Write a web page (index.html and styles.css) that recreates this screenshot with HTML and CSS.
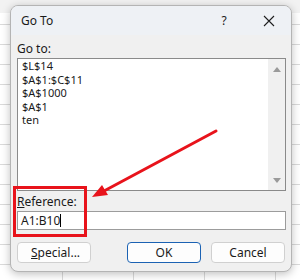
FILE: index.html
```html
<!DOCTYPE html>
<html lang="en">
<head>
    <meta charset="UTF-8">
    <meta name="viewport" content="width=device-width, initial-scale=1.0">
    <title>Go To</title>
    <link rel="stylesheet" href="styles.css">
</head>
<body>
    <div class="sheet">
        <div class="dialog">
            <div class="titlebar">
                <div class="title">Go To</div>
                <div class="help">?</div>
                <div class="close">
                    <svg width="12" height="12" viewBox="0 0 12 12">
                        <path d="M1 1 L11 11 M11 1 L1 11" stroke="#1f1f1f" stroke-width="1.1" fill="none"/>
                    </svg>
                </div>
            </div>
            <div class="content">
                <div class="label label-goto">Go to:</div>
                <div class="listbox">
                    <div class="items">
                        <div class="item">$L$14</div>
                        <div class="item">$A$1:$C$11</div>
                        <div class="item">$A$1000</div>
                        <div class="item">$A$1</div>
                        <div class="item">ten</div>
                    </div>
                    <div class="scrollbar">
                        <div class="arrow-up"></div>
                        <div class="arrow-down"></div>
                    </div>
                </div>
                <div class="label label-ref"><u>R</u>eference:</div>
                <div class="input">A1:B10<span class="caret"></span></div>
                <div class="buttons">
                    <button class="btn">&nbsp;<u>S</u>pecial...</button>
                    <div class="btn-group">
                        <button class="btn btn-default">OK</button>
                        <button class="btn">Cancel</button>
                    </div>
                </div>
            </div>
        </div>
    </div>

    <!-- annotation drawn on top of the screenshot -->
    <div class="mark-box"></div>
    <svg class="mark-arrow" width="300" height="280" viewBox="0 0 300 280">
        <line x1="216" y1="131" x2="104" y2="191" stroke="#e8131b" stroke-width="3" stroke-linecap="round"/>
        <polygon points="92,197 108,195 102,185" fill="#e8131b"/>
    </svg>
</body>
</html>
```

FILE: styles.css
```css
body {
    margin: 0;
    padding: 0;
    width: 300px;
    height: 280px;
    overflow: hidden;
    position: relative;
    font-family: "Noto Sans", "Open Sans", sans-serif;
    font-size: 12px;
    color: #1a1a1a;
    background-color: #fff;
    background-image:
        linear-gradient(#f2f2f2 0, #f2f2f2 13px, transparent 13px),
        repeating-linear-gradient(to bottom, transparent 0, transparent 4px, #dadada 4px, #dadada 5px, transparent 5px, transparent 20px),
        repeating-linear-gradient(to right, transparent 0, transparent 62px, #dadada 62px, #dadada 63px, transparent 63px, transparent 71px);
}
.sheet {
    padding: 5px 8px 8px 10px;
}
.dialog {
    height: 265px;
    background-color: #f0f0f0;
    border: 1px solid #b4b4b4;
    border-radius: 8px;
    box-shadow: 0 2px 8px rgba(0, 0, 0, 0.25);
    overflow: hidden;
}
.titlebar {
    display: flex;
    align-items: center;
    height: 29px;
    background-color: #eef1f5;
    padding-left: 10px;
}
.title {
    font-size: 12px;
    flex: 1;
}
.help {
    width: 20px;
    text-align: center;
    font-size: 12px;
    margin-right: 25px;
}
.close {
    width: 20px;
    display: flex;
    justify-content: center;
    margin-right: 12px;
}
.content {
    padding: 6px 5px 0 6px;
}
.label {
    height: 16px;
    line-height: 16px;
}
.label-goto {
    margin-bottom: 1px;
}
.label-ref {
    margin-top: 3px;
}
.listbox {
    display: flex;
    height: 131px;
    background-color: #fff;
    border: 1px solid #8a8a8a;
}
.items {
    flex: 1;
    padding-left: 4px;
    font-size: 11px;
    line-height: 13.5px;
}
.scrollbar {
    width: 17px;
    background-color: #f0f0f0;
    display: flex;
    flex-direction: column;
    justify-content: space-between;
    align-items: center;
    padding: 8px 0 7px;
}
.arrow-up {
    width: 0;
    height: 0;
    border-left: 4px solid transparent;
    border-right: 4px solid transparent;
    border-bottom: 5px solid #9a9a9a;
}
.arrow-down {
    width: 0;
    height: 0;
    border-left: 4px solid transparent;
    border-right: 4px solid transparent;
    border-top: 5px solid #9a9a9a;
}
.input {
    margin-top: 1px;
    height: 17px;
    line-height: 17px;
    padding-left: 3px;
    background-color: #fff;
    border: 1px solid #9c9c9c;
}
.caret {
    display: inline-block;
    width: 1px;
    height: 13px;
    background-color: #000;
    vertical-align: -2px;
}
.buttons {
    display: flex;
    justify-content: space-between;
    margin-top: 12px;
    margin-right: 1px;
}
.btn-group {
    display: flex;
    gap: 10px;
}
.btn {
    width: 74px;
    height: 21px;
    padding: 0;
    font-family: inherit;
    font-size: 12px;
    color: #1a1a1a;
    background-color: #fdfdfd;
    border: 1px solid #d0d0d0;
    border-radius: 4px;
}
.btn-default {
    border: 1px solid #1b62b3;
}
.mark-box {
    position: absolute;
    left: 13px;
    top: 186px;
    width: 68px;
    height: 45px;
    border: 3px solid #e8131b;
}
.mark-arrow {
    position: absolute;
    left: 0;
    top: 0;
}
```
